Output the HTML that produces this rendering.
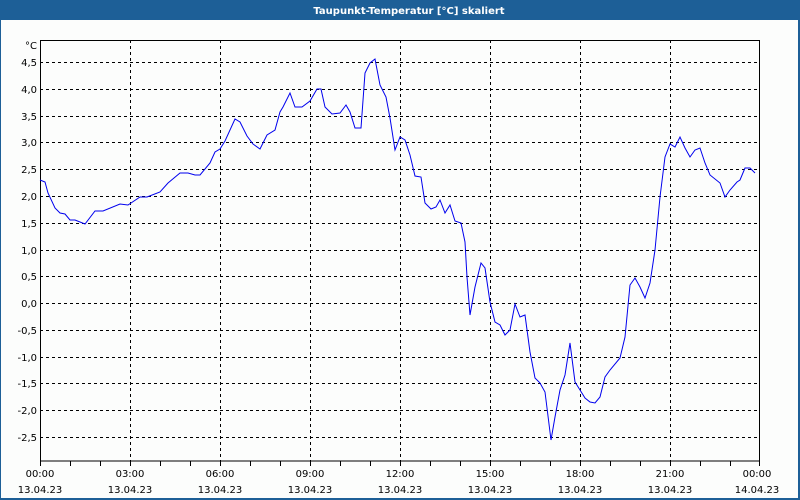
<!DOCTYPE html>
<html><head><meta charset="utf-8"><style>
html,body{margin:0;padding:0;width:800px;height:500px;overflow:hidden;background:#fff}
svg{display:block}
text{font-family:"DejaVu Sans","Liberation Sans",sans-serif;font-size:10px;fill:#000}
</style></head><body>
<svg width="800" height="500" xmlns="http://www.w3.org/2000/svg" shape-rendering="crispEdges">
<rect x="0" y="0" width="800" height="500" fill="#fcfdfc"/>
<rect x="0" y="0" width="800" height="20" fill="#1d5f97"/>
<rect x="0" y="20" width="1" height="480" fill="#1d5f97"/>
<rect x="798" y="20" width="2" height="480" fill="#1d5f97"/>
<rect x="0" y="498" width="800" height="2" fill="#1d5f97"/>
<text x="409" y="14" text-anchor="middle" style="fill:#fff;font-weight:bold;font-size:10px">Taupunkt-Temperatur [°C] skaliert</text>
<g stroke="#000" stroke-width="1" stroke-dasharray="3,3" fill="none">
<path d="M40 62.5H760M40 89.5H760M40 116.5H760M40 142.5H760M40 169.5H760M40 196.5H760M40 223.5H760M40 250.5H760M40 276.5H760M40 303.5H760M40 330.5H760M40 357.5H760M40 383.5H760M40 410.5H760M40 437.5H760"/>
<path d="M130.5 40V461M220.5 40V461M310.5 40V461M400.5 40V461M490.5 40V461M580.5 40V461M670.5 40V461"/>
</g>
<rect x="40.5" y="40.5" width="719" height="420.5" fill="none" stroke="#000" stroke-width="1"/>
<path stroke="#000" d="M70.5 461V466M100.5 461V466M130.5 461V466M160.5 461V466M190.5 461V466M220.5 461V466M250.5 461V466M280.5 461V466M310.5 461V466M340.5 461V466M370.5 461V466M400.5 461V466M430.5 461V466M460.5 461V466M490.5 461V466M520.5 461V466M550.5 461V466M580.5 461V466M610.5 461V466M640.5 461V466M670.5 461V466M700.5 461V466M730.5 461V466M40.5 461V466M759.5 461V466"/>
<polyline shape-rendering="auto" fill="none" stroke="#0000ee" stroke-width="1" points="40,180 45,182 48,193 55,208 60,213 65,214 70,220 75,220 85,224 95,211 103,211 120,204 128,205 140,197 147,197 160,192 168,183 180,173 188,173 195,175 200,175 210,163 215,152 220,149 225,141 235,119 240,122 247,136 253,144 260,149 267,135 275,130 280,112 283,107 290,93 295,107 302,107 310,101 317,89 321,89 325,107 332,114 340,113 346,105 350,112 355,128 361,128 365,73 370,63 375,59 380,85 386,97 390,118 395,150 400,137 405,140 410,155 415,176 421,177 425,203 431,209 436,207 440,200 445,213 450,205 455,221 461,223 465,242 467,277 470,315 475,287 481,263 485,268 490,302 495,322 500,325 505,335 510,330 515,304 520,317 525,315 530,352 535,378 540,383 545,392 551,440 555,417 560,390 565,375 570,343 575,382 580,390 585,398 590,402 595,403 600,397 605,377 610,370 620,358 625,337 630,285 635,278 640,287 645,298 650,283 655,250 660,197 665,157 670,144 675,147 680,137 685,148 690,157 695,150 700,148 705,163 710,175 720,183 725,197 730,190 737,182 740,180 745,168 750,168 755,173"/>
<g text-anchor="end">
<text x="37" y="49">°C</text>
<text x="37" y="66">4,5</text>
<text x="37" y="93">4,0</text>
<text x="37" y="120">3,5</text>
<text x="37" y="146">3,0</text>
<text x="37" y="173">2,5</text>
<text x="37" y="200">2,0</text>
<text x="37" y="227">1,5</text>
<text x="37" y="254">1,0</text>
<text x="37" y="280">0,5</text>
<text x="37" y="307">0,0</text>
<text x="37" y="334">-0,5</text>
<text x="37" y="361">-1,0</text>
<text x="37" y="387">-1,5</text>
<text x="37" y="414">-2,0</text>
<text x="37" y="441">-2,5</text>
</g>
<g text-anchor="middle">
<text x="40" y="477">00:00</text><text x="40" y="493">13.04.23</text>
<text x="130" y="477">03:00</text><text x="130" y="493">13.04.23</text>
<text x="220" y="477">06:00</text><text x="220" y="493">13.04.23</text>
<text x="310" y="477">09:00</text><text x="310" y="493">13.04.23</text>
<text x="400" y="477">12:00</text><text x="400" y="493">13.04.23</text>
<text x="490" y="477">15:00</text><text x="490" y="493">13.04.23</text>
<text x="580" y="477">18:00</text><text x="580" y="493">13.04.23</text>
<text x="670" y="477">21:00</text><text x="670" y="493">13.04.23</text>
<text x="757" y="477">00:00</text><text x="757" y="493">14.04.23</text>
</g>
</svg>
</body></html>
